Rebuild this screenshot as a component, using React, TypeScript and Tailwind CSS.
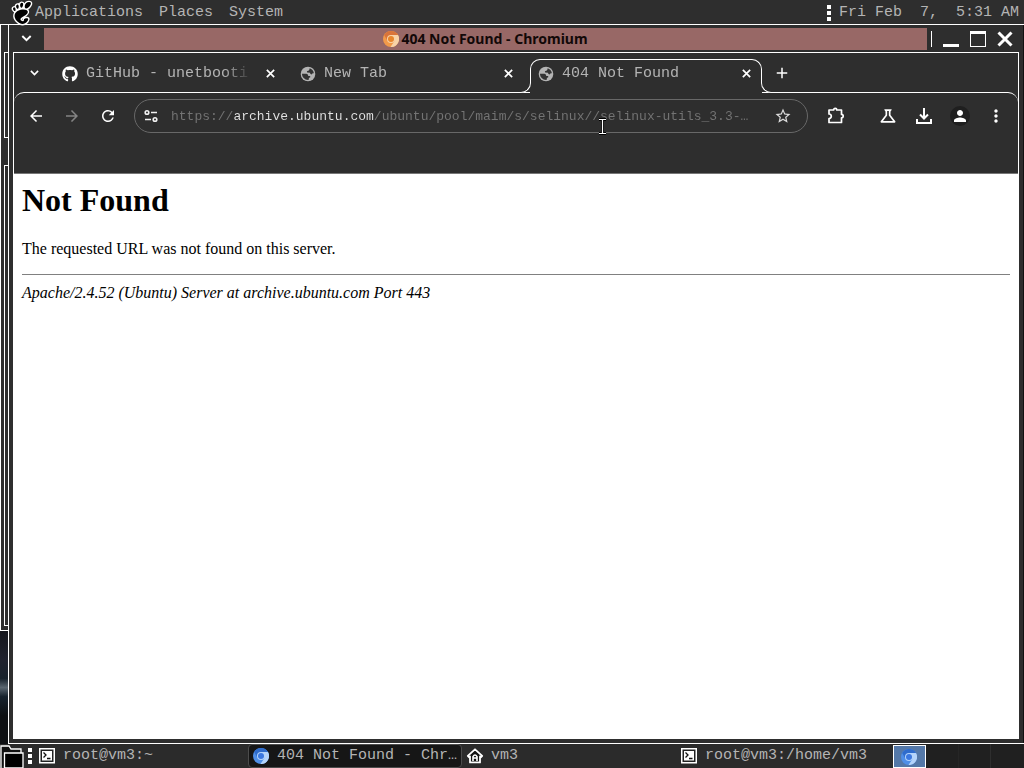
import React from "react";
import {
  MdAdd,
  MdArrowBack,
  MdArrowForward,
  MdMoreVert,
  MdOutlineScience,
  MdPerson,
  MdRefresh,
  MdStarBorder,
} from "react-icons/md";
import { FaGithub } from "react-icons/fa";
import { SiGnome } from "react-icons/si";

const URL_TEXT =
  "https://archive.ubuntu.com/ubuntu/pool/maim/s/selinux//selinux-utils_3.3-…";

function ChromiumLogo({ warm = false, className }: { warm?: boolean; className: string }) {
  const [dark, mid, light, core] = warm
    ? ["#d9743a", "#f29a4a", "#f8d3a8", "#e8862c"]
    : ["#2f6ccc", "#4f8fe8", "#b4d4fb", "#3b78e0"];
  return (
    <svg viewBox="0 0 16 16" className={className} aria-hidden="true">
      <circle cx="8" cy="8" r="8" fill={mid} />
      <path d="M8 4H15A8 8 0 0 1 7.5 16L11.5 10Z" fill={light} />
      <path d="M1.2 4A8 8 0 0 1 15 4H8L4.6 10Z" fill={dark} />
      <circle cx="8" cy="8" r="4" fill={light} />
      <circle cx="8" cy="8" r="3" fill={core} />
    </svg>
  );
}

function Cross({ className, weight }: { className: string; weight: string }) {
  return (
    <svg viewBox="0 0 16 16" className={className} fill="none" stroke="#fff" strokeWidth={weight} aria-hidden="true">
      <path d="M1.5 1.5L14.5 14.5M14.5 1.5L1.5 14.5" />
    </svg>
  );
}

function Chevron({ className }: { className: string }) {
  return (
    <svg viewBox="0 0 12 8" className={className} fill="none" stroke="#fff" strokeWidth="2.2" aria-hidden="true">
      <path d="M1.2 1.2L6 6L10.8 1.2" />
    </svg>
  );
}

function Globe() {
  return (
    <svg viewBox="0 0 16 16" className="size-4 shrink-0" aria-hidden="true">
      <circle cx="8" cy="8" r="7.3" fill="#b4b4b4" />
      <path
        d="M9.6 2.2C11.8 2.8 13.6 4.8 13.9 7.2C12.8 7 12.2 7.6 11.6 8.4C10.6 8.2 9.9 7.6 10 6.8L7.2 6.6C6.6 5.6 7 5 8.2 4.8C9 4.4 9.8 3.4 9.6 2.2Z"
        fill="#343434"
      />
      <path
        d="M2 7.8H6.2C7.6 7.9 8.3 8.9 8.2 10H10.2V11.4C9.2 11.4 8.7 12 8.6 13.9C5 14.2 2 11.4 2 7.8Z"
        fill="#343434"
      />
    </svg>
  );
}

function TerminalIcon() {
  return (
    <svg viewBox="0 0 16 16" className="size-4 shrink-0" aria-hidden="true">
      <rect x="0.75" y="0.75" width="14.5" height="14" fill="#222" stroke="#fff" strokeWidth="1.5" />
      <rect x="3" y="3" width="10" height="9.5" fill="#fff" />
      <path d="M4.5 4.5L7 7L4.5 9.5M8 10.5H11.5" fill="none" stroke="#111" strokeWidth="1.3" />
    </svg>
  );
}

function HomeIcon() {
  return (
    <svg viewBox="0 0 16 16" className="size-4 shrink-0 overflow-visible" aria-hidden="true">
      <path d="M8 1.3L0.8 7.8L2 9.2L3 8.4V14.4H13V8.4L14 9.2L15.2 7.8Z" fill="#111" stroke="#fff" strokeWidth="1.8" strokeLinejoin="round" />
      <path d="M6 13V8.6Q8 5.4 10 8.6V13M6 10H10" fill="none" stroke="#fff" strokeWidth="1.6" />
    </svg>
  );
}

function Grip() {
  return (
    <span className="flex flex-col gap-0.5" aria-hidden="true">
      <span className="size-1 bg-white" />
      <span className="size-1 bg-white" />
      <span className="size-1 bg-white" />
    </span>
  );
}

function Tab({ icon, title, active = false }: { icon: React.ReactNode; title: string; active?: boolean }) {
  return (
    <div className={active ? "relative z-10 -mb-px w-[238px] shrink-0 pt-1.5" : "relative w-[238px] shrink-0 pt-1.5"}>
      {active && (
        <span aria-hidden="true">
          <span className="absolute top-1.5 right-1.5 left-0 h-[35px] rounded-t-[10px] bg-[#2e2e2e]" />
          <span className="absolute top-1.5 right-1.5 left-0 h-6 rounded-t-[10px] border-x border-t border-white" />
          <span className="absolute bottom-0 -left-2.5 size-[11px] rounded-br-[10px] border-r border-b border-white bg-[#2e2e2e]" />
          <span className="absolute right-[-4px] bottom-0 size-[11px] rounded-bl-[10px] border-b border-l border-white bg-[#2e2e2e]" />
        </span>
      )}
      <div className="relative flex h-7 items-center pt-px pr-3.5 pl-2">
        {icon}
        <a
          href="#"
          className="ml-2 flex-1 whitespace-nowrap [mask-image:linear-gradient(90deg,#000_138px,transparent_166px)]"
        >
          {title}
        </a>
        <button type="button" aria-label={"Close " + title} className="flex w-4 justify-center">
          <Cross className="size-[9px]" weight="3" />
        </button>
      </div>
    </div>
  );
}

function ToolButton({ label, children, className = "" }: { label: string; children: React.ReactNode; className?: string }) {
  return (
    <button type="button" aria-label={label} className={"flex h-9 w-9 shrink-0 items-center justify-center text-white " + className}>
      {children}
    </button>
  );
}

function Task({ icon, title, active = false }: { icon: React.ReactNode; title: string; active?: boolean }) {
  return (
    <button
      type="button"
      className={
        active
          ? "flex w-[214px] items-center gap-2 rounded-sm border border-[#4c4c4c] bg-[#161616] pl-1 text-left"
          : "flex w-[214px] items-center gap-2 border border-transparent pl-1 text-left"
      }
    >
      {icon}
      <span className="truncate">{title}</span>
    </button>
  );
}

export default function App() {
  return (
    <div className="relative flex min-h-screen flex-col overflow-hidden bg-[#2e2e2e] font-['Liberation_Mono',monospace] text-[15px] leading-5 text-[#b4b4b4]">
      <header className="flex h-6 items-center justify-between pt-0.5 pr-[5px] pl-[11px]">
        <nav className="flex items-center gap-4">
          <a href="#" className="flex items-center gap-0.5">
            <SiGnome className="size-[22px] overflow-visible fill-black stroke-white [paint-order:stroke]" strokeWidth="3" />
            Applications
          </a>
          <a href="#">Places</a>
          <a href="#">System</a>
        </nav>
        <div className="flex items-center gap-2">
          <Grip />
          <time className="whitespace-pre">{"Fri Feb  7,  5:31 AM"}</time>
        </div>
      </header>

      <div className="flex flex-1">
        <div className="flex w-2 shrink-0 flex-col bg-[#0d0e12]" aria-hidden="true">
          <div className="flex h-[607px] flex-col border-y border-l border-white bg-[#2e2e2e] pb-1 pl-[3px]">
            <span className="mt-[27px] h-[86px] border-y border-l border-white" />
            <span className="mt-[27px] flex-1 border-y border-l border-white" />
          </div>
          <div className="flex-1 bg-[linear-gradient(180deg,#15161c_0%,#20222e_25%,#18222c_42%,#5a6670_50%,#17232e_58%,#0d0f12_75%)]" />
        </div>

        <div className="flex min-w-0 flex-1 flex-col border-y border-l border-white pr-[5px] pl-1 shadow-[inset_-1px_0_0_#111]">
          <div className="flex h-[27px] items-center">
            <button type="button" aria-label="Window menu" className="flex w-[31px] justify-center pr-1">
              <Chevron className="h-[7px] w-[11px]" />
            </button>
            <h1 className="flex h-[22px] flex-1 items-center justify-center gap-0.5 bg-[#986866] font-['Noto_Sans',sans-serif] text-[14px] font-bold text-[#120808]">
              <ChromiumLogo warm className="size-4" />
              404 Not Found - Chromium
            </h1>
            <div className="flex h-[22px] items-center pl-1 text-white">
              <span className="h-4 w-px bg-white" />
              <button type="button" aria-label="Minimize" className="ml-[11px] flex h-4 w-4 items-end">
                <span className="h-[3px] w-4 bg-white" />
              </button>
              <button type="button" aria-label="Maximize" className="ml-[11px] h-4 w-4 border border-t-[3px] border-white" />
              <button type="button" aria-label="Close window" className="ml-[11px] pr-1.5">
                <Cross className="size-4" weight="3" />
              </button>
            </div>
          </div>

          <div className="flex flex-1 flex-col border border-white">
            <div className="flex h-[39px] shrink-0">
              <button type="button" aria-label="Search tabs" className="flex h-10 w-10 items-center justify-center">
                <Chevron className="h-[6px] w-[9px]" />
              </button>
              <Tab icon={<FaGithub className="size-4 shrink-0 text-white" />} title="GitHub - unetbooti" />
              <Tab icon={<Globe />} title="New Tab" />
              <Tab icon={<Globe />} title="404 Not Found" active />
              <button type="button" aria-label="New tab" className="flex h-10 w-7 items-center justify-center text-white">
                <MdAdd className="size-[18px]" />
              </button>
            </div>

            <div className="h-[82px] shrink-0 rounded-t-[10px] border-t border-b border-t-white border-b-[#777]">
              <div className="flex h-[46px] items-center px-1">
                <ToolButton label="Back"><MdArrowBack className="size-[18px]" /></ToolButton>
                <ToolButton label="Forward"><MdArrowForward className="size-[18px] text-[#848484]" /></ToolButton>
                <ToolButton label="Reload"><MdRefresh className="size-[18px]" /></ToolButton>
                <div className="ml-2 flex h-[34px] min-w-0 flex-1 items-center rounded-full border border-[#686868] pr-2">
                  <button type="button" aria-label="Site information" className="flex w-8 shrink-0 justify-center">
                    <svg viewBox="0 0 16 16" className="size-4" fill="none" stroke="#f2f2f2" strokeWidth="1.6">
                      <circle cx="4" cy="4.5" r="1.8" />
                      <path d="M8 4.5H14M2 11.5H8" />
                      <circle cx="12" cy="11.5" r="1.8" />
                    </svg>
                  </button>
                  <input
                    type="text"
                    aria-label="Address"
                    defaultValue={URL_TEXT}
                    className="mx-1 h-6 min-w-0 flex-1 bg-[linear-gradient(90deg,#747474_8ch,#e4e4e4_8ch,#e4e4e4_26ch,#747474_26ch)] bg-clip-text text-[13px] text-transparent outline-none"
                  />
                  <button type="button" aria-label="Bookmark" className="flex w-8 shrink-0 justify-center text-[#dcdcdc]">
                    <MdStarBorder className="size-[18px]" />
                  </button>
                </div>
                <ToolButton label="Extensions" className="ml-2.5">
                  <svg viewBox="0 0 20 20" className="size-5" fill="none" stroke="#fff" strokeWidth="1.7" strokeLinejoin="round">
                    <path d="M3 4H7.6A1.6 1.6 0 0 1 10.8 4H15.5V8.4A1.6 1.6 0 0 1 15.5 11.8V16.5H3V12.6A2.3 2.3 0 0 0 3 8Z" />
                  </svg>
                </ToolButton>
                <ToolButton label="Labs" className="ml-4"><MdOutlineScience className="size-5" /></ToolButton>
                <ToolButton label="Downloads">
                  <svg viewBox="0 0 18 18" className="size-[18px]" fill="none" stroke="#fff" strokeWidth="2">
                    <path d="M9 1V11M5 7.5L9 11.5L13 7.5M2 12V16H16V12" />
                  </svg>
                </ToolButton>
                <ToolButton label="Profile">
                  <span className="flex size-5 items-center justify-center rounded-full bg-[#1f1f1f]">
                    <MdPerson className="size-[18px]" />
                  </span>
                </ToolButton>
                <ToolButton label="Menu"><MdMoreVert className="size-5" /></ToolButton>
              </div>
            </div>

            <main className="flex-1 bg-white px-2 pt-2 font-['Liberation_Serif',serif] text-[16px] leading-[18px] text-black">
              <h2 className="text-[32px] leading-[37px] font-bold">Not Found</h2>
              <p className="mt-[21px]">The requested URL was not found on this server.</p>
              <hr className="mt-4 border-t border-[#808080]" />
              <address className="mt-[9px]">Apache/2.4.52 (Ubuntu) Server at archive.ubuntu.com Port 443</address>
            </main>
          </div>
          <div className="h-1 shrink-0" />
        </div>
      </div>

      <footer className="flex h-6 bg-[#2b2b2b]">
        <button type="button" aria-label="Show desktop" className="w-6 shrink-0">
          <svg viewBox="0 0 24 24" className="size-6">
            <path d="M1 24V2H9L11 5H21V9" fill="#111" stroke="#fff" strokeWidth="1.3" />
            <path d="M4.5 24V9H23V24Z" fill="#000" stroke="#fff" strokeWidth="1.3" />
          </svg>
        </button>
        <div className="flex w-2.5 shrink-0 items-center pl-1"><Grip /></div>
        <Task icon={<TerminalIcon />} title="root@vm3:~" />
        <Task active icon={<ChromiumLogo className="size-4 shrink-0" />} title="404 Not Found - Chr…" />
        <Task icon={<HomeIcon />} title="vm3" />
        <Task icon={<TerminalIcon />} title="root@vm3:/home/vm3" />
        <div className="ml-[3px] grid flex-1 grid-cols-4 bg-[#202020]">
          <button type="button" aria-label="Workspace 1" className="mt-px flex items-center justify-center border border-white bg-[#5478a8]">
            <ChromiumLogo className="size-4" />
          </button>
          <button type="button" aria-label="Workspace 2" className="border-r border-[#262626]" />
          <button type="button" aria-label="Workspace 3" className="border-r border-[#2e2e2e]" />
          <button type="button" aria-label="Workspace 4" />
        </div>
      </footer>

      <svg viewBox="0 0 9 17" className="pointer-events-none absolute top-[118px] left-[598px] z-20 h-[17px] w-[9px]" fill="none" aria-hidden="true">
        <path d="M1 1.5H8M4.5 1.5V15.5M1 15.5H8" stroke="#000" strokeWidth="3" />
        <path d="M1 1.5H8M4.5 1.5V15.5M1 15.5H8" stroke="#fff" strokeWidth="1.2" />
      </svg>
    </div>
  );
}
